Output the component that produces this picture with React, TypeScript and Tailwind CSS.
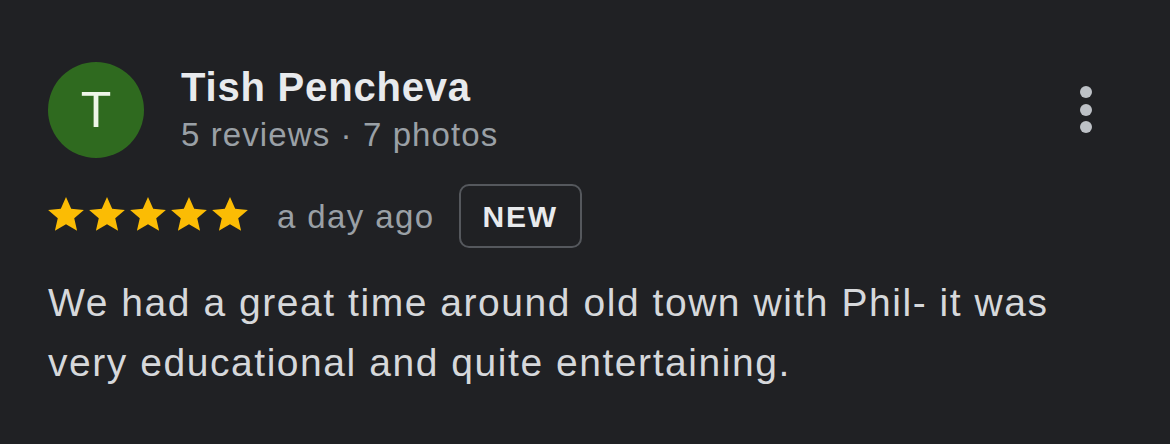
export default function App() {
  const stars = [0, 1, 2, 3, 4];
  return (
    <div className="w-[1170px] h-[444px] bg-[#202124] font-['Liberation_Sans',Arial,sans-serif] overflow-hidden">
      <div className="pl-[48px] pr-[72px] pt-[62px]">
        {/* header */}
        <div className="flex items-start">
          <div className="w-[96px] h-[96px] rounded-full bg-[#2f6a1f] flex items-center justify-center text-[#eef6e8] text-[50px] leading-none shrink-0">
            T
          </div>
          <div className="ml-[37px] flex-1">
            <div className="text-[#e8eaed] text-[40px] font-bold leading-[40px] tracking-[0.8px] mt-[5px]">
              Tish Pencheva
            </div>
            <div className="text-[#9aa0a6] text-[33px] leading-[40px] tracking-[1.1px] mt-[8px]">
              5 reviews · 7 photos
            </div>
          </div>
          <div className="flex flex-col gap-[5.5px] mt-[24px] mr-[6px]">
            <span className="w-[12px] h-[12px] rounded-full bg-[#bdc1c6]" />
            <span className="w-[12px] h-[12px] rounded-full bg-[#bdc1c6]" />
            <span className="w-[12px] h-[12px] rounded-full bg-[#bdc1c6]" />
          </div>
        </div>

        {/* rating row */}
        <div className="flex items-center mt-[26px]">
          <div className="flex gap-[5px] mt-[-4px]">
            {stars.map((i) => (
              <svg key={i} width="36" height="34" viewBox="2 2.5 20 19">
                <path
                  d="M12 2.5l2.9 6.6 7.1.6-5.4 4.7 1.6 7-6.2-3.7-6.2 3.7 1.6-7L2 9.7l7.1-.6z"
                  fill="#fbbc04"
                />
              </svg>
            ))}
          </div>
          <span className="ml-[29px] text-[#9aa0a6] text-[33px] leading-none tracking-[1.4px]">a day ago</span>
          <span className="ml-[24px] h-[64px] px-[22px] flex items-center border-2 border-[#55585d] rounded-[10px] text-[#e8eaed] text-[30px] font-bold tracking-[1.8px]">
            NEW
          </span>
        </div>

        {/* review body */}
        <p className="mt-[25px] text-[#d6d8db] text-[39px] leading-[60px] tracking-[1.55px]">
          We had a great time around old town with Phil- it was very educational and quite entertaining.
        </p>
      </div>
    </div>
  );
}
